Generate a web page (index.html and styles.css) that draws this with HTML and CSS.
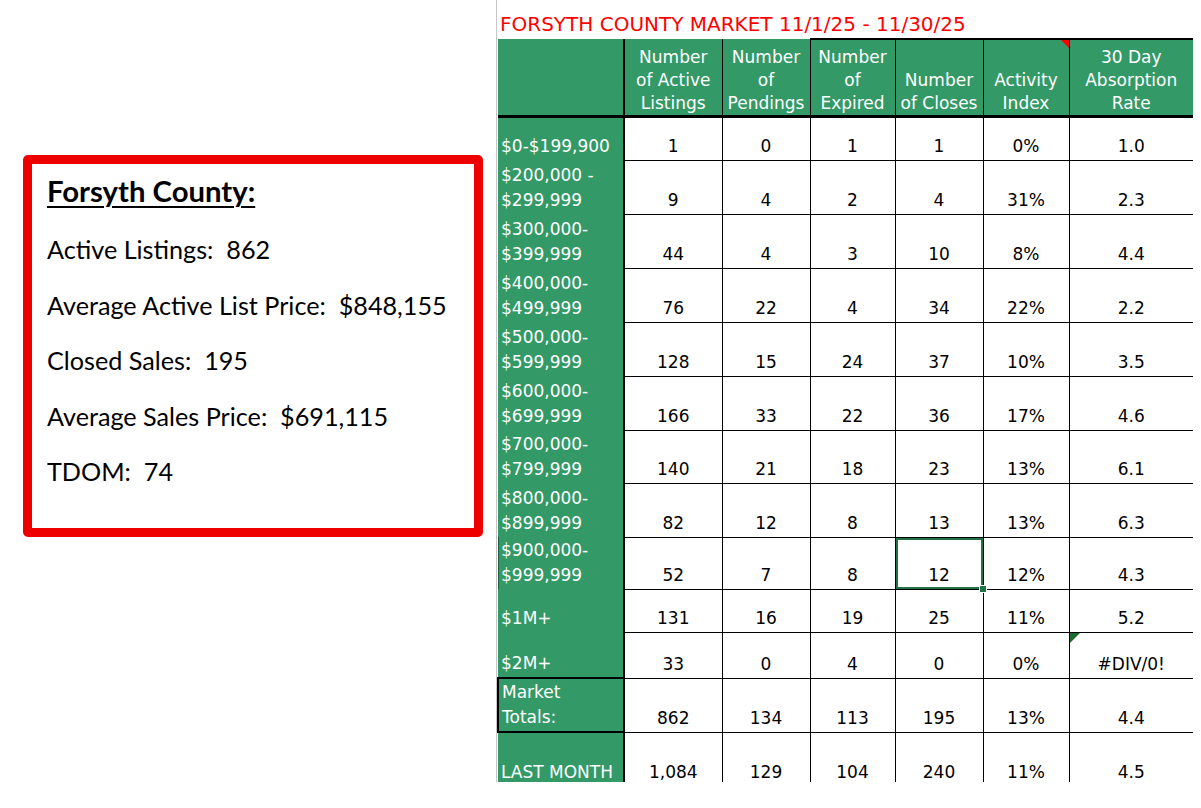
FILE: index.html
```html
<!DOCTYPE html>
<html>
<head>
<meta charset="utf-8">
<link rel="stylesheet" href="styles.css">
</head>
<body>
<div class="left">
  <div class="summary">
    <div class="sum-title">Forsyth County:</div>
    <div class="sum-line">Active Listings:&nbsp; 862</div>
    <div class="sum-line">Average Active List Price:&nbsp; $848,155</div>
    <div class="sum-line">Closed Sales:&nbsp; 195</div>
    <div class="sum-line">Average Sales Price:&nbsp; $691,115</div>
    <div class="sum-line">TDOM:&nbsp; 74</div>
  </div>
</div>
<div class="sheet">
  <div class="title">FORSYTH COUNTY MARKET 11/1/25 - 11/30/25</div>
  <table class="grid">
    <colgroup>
      <col class="c-label"><col class="c1"><col class="c2"><col class="c3"><col class="c4"><col class="c5"><col class="c6">
    </colgroup>
    <thead>
      <tr class="r-hdr">
        <th class="hl"></th>
        <th>Number<br>of Active<br>Listings</th>
        <th>Number<br>of<br>Pendings</th>
        <th class="top">Number<br>of<br>Expired</th>
        <th class="top">Number<br>of Closes</th>
        <th class="top comment">Activity<br>Index<span class="red-tri"></span></th>
        <th class="top last">30 Day<br>Absorption<br>Rate</th>
      </tr>
    </thead>
    <tbody>
      <tr class="r44"><td class="lab">$0-$199,900</td><td>1</td><td>0</td><td>1</td><td>1</td><td>0%</td><td class="last">1.0</td></tr>
      <tr class="r54"><td class="lab">$200,000 -<br>$299,999</td><td>9</td><td>4</td><td>2</td><td>4</td><td>31%</td><td class="last">2.3</td></tr>
      <tr class="r54"><td class="lab">$300,000-<br>$399,999</td><td>44</td><td>4</td><td>3</td><td>10</td><td>8%</td><td class="last">4.4</td></tr>
      <tr class="r54"><td class="lab">$400,000-<br>$499,999</td><td>76</td><td>22</td><td>4</td><td>34</td><td>22%</td><td class="last">2.2</td></tr>
      <tr class="r54"><td class="lab">$500,000-<br>$599,999</td><td>128</td><td>15</td><td>24</td><td>37</td><td>10%</td><td class="last">3.5</td></tr>
      <tr class="r54"><td class="lab">$600,000-<br>$699,999</td><td>166</td><td>33</td><td>22</td><td>36</td><td>17%</td><td class="last">4.6</td></tr>
      <tr class="r53"><td class="lab">$700,000-<br>$799,999</td><td>140</td><td>21</td><td>18</td><td>23</td><td>13%</td><td class="last">6.1</td></tr>
      <tr class="r54"><td class="lab">$800,000-<br>$899,999</td><td>82</td><td>12</td><td>8</td><td>13</td><td>13%</td><td class="last">6.3</td></tr>
      <tr class="r52"><td class="lab lab-sel">$900,000-<br>$999,999</td><td>52</td><td>7</td><td>8</td><td class="selected">12<span class="handle"></span></td><td>12%</td><td class="last">4.3</td></tr>
      <tr class="r43"><td class="lab">$1M+</td><td>131</td><td>16</td><td>19</td><td>25</td><td>11%</td><td class="last">5.2</td></tr>
      <tr class="r46"><td class="lab">$2M+</td><td>33</td><td>0</td><td>4</td><td>0</td><td>0%</td><td class="last err">#DIV/0!<span class="green-tri"></span></td></tr>
      <tr class="r54"><td class="lab lab-box">Market<br>Totals:</td><td>862</td><td>134</td><td>113</td><td>195</td><td>13%</td><td class="last">4.4</td></tr>
      <tr class="r54"><td class="lab">LAST MONTH</td><td>1,084</td><td>129</td><td>104</td><td>240</td><td>11%</td><td class="last">4.5</td></tr>
    </tbody>
  </table>
</div>
</body>
</html>
```

FILE: styles.css
```css
html, body {
  margin: 0;
  padding: 0;
  background: #ffffff;
}
body {
  display: flex;
  align-items: flex-start;
  width: 1201px;
  height: 808px;
  overflow: hidden;
}
.left {
  width: 496px;
  flex: none;
  padding-top: 155px;
  padding-left: 23px;
  box-sizing: border-box;
}
.summary {
  width: 460px;
  height: 382px;
  box-sizing: border-box;
  border: 9px solid #ee0000;
  border-radius: 5px;
  padding: 9px 0 0 15px;
  font-family: "Lato", "Liberation Sans", sans-serif;
  color: #000;
}
.sum-title {
  font-size: 29.3px;
  font-weight: 700;
  text-decoration: underline;
  text-decoration-thickness: 2px;
  text-underline-offset: 4px;
  line-height: 36px;
  margin-bottom: 20px;
}
.sum-line {
  font-size: 25.2px;
  line-height: 40px;
  margin-bottom: 15.6px;
}
.sheet {
  flex: none;
  width: 705px;
  height: 782px;
  overflow: hidden;
  border-left: 1px solid #c6c6c6;
  box-sizing: border-box;
  font-family: "DejaVu Sans", sans-serif;
}
.title {
  color: #ff0000;
  font-size: 20px;
  line-height: 24px;
  padding: 12px 0 2px 3px;
  white-space: nowrap;
}
.grid {
  border-collapse: collapse;
  table-layout: fixed;
  width: 695px;
}
.c-label { width: 126px; }
.c1 { width: 98px; }
.c2 { width: 88px; }
.c3 { width: 85px; }
.c4 { width: 88px; }
.c5 { width: 86px; }
.c6 { width: 124px; }
th {
  background: #339966;
  color: #ffffff;
  font-weight: 400;
  font-size: 17px;
  line-height: 23px;
  text-align: center;
  vertical-align: bottom;
  padding: 0;
  border-left: 1px solid #000;
  border-right: 1px solid #000;
  border-bottom: 3px solid #000;
  white-space: nowrap;
  overflow: hidden;
}
th.hl {
  border-left: none;
  border-right: 2px solid #000;
}
th.top {
  border-top: 2px solid #000;
}
th.last {
  border-right: none;
}
.r-hdr { height: 77px; }
.r43 { height: 43px; }
.r44 { height: 44px; }
.r46 { height: 46px; }
.r52 { height: 52px; }
.r53 { height: 53px; }
.r54 { height: 54px; }
td {
  font-size: 17px;
  line-height: 23px;
  text-align: center;
  vertical-align: bottom;
  padding: 0 0 2px 0;
  border: 1px solid #000;
  color: #000;
  white-space: nowrap;
}
td.last {
  border-right: none;
}
td.lab {
  background: #339966;
  color: #ffffff;
  text-align: left;
  line-height: 25px;
  padding: 0 0 1px 3px;
  border-left: none;
  border-top: none;
  border-bottom: none;
  border-right: 2px solid #000;
}
td.lab-sel {
  box-shadow: inset 1px 0 0 #1f5e3c;
}
td.lab-box {
  border: 2px solid #000;
}
.comment, .err, .selected {
  position: relative;
}
.red-tri {
  position: absolute;
  top: 0;
  right: 0;
  width: 0;
  height: 0;
  border-top: 8px solid #ff0000;
  border-left: 8px solid transparent;
}
.green-tri {
  position: absolute;
  top: 0;
  left: 0;
  width: 0;
  height: 0;
  border-top: 10px solid #1e6b2d;
  border-right: 10px solid transparent;
}
td.selected {
  box-shadow: inset 0 0 0 2px #217346;
}
.handle {
  position: absolute;
  right: -4px;
  bottom: -4px;
  width: 6px;
  height: 6px;
  background: #217346;
  border: 1px solid #ffffff;
}
```
